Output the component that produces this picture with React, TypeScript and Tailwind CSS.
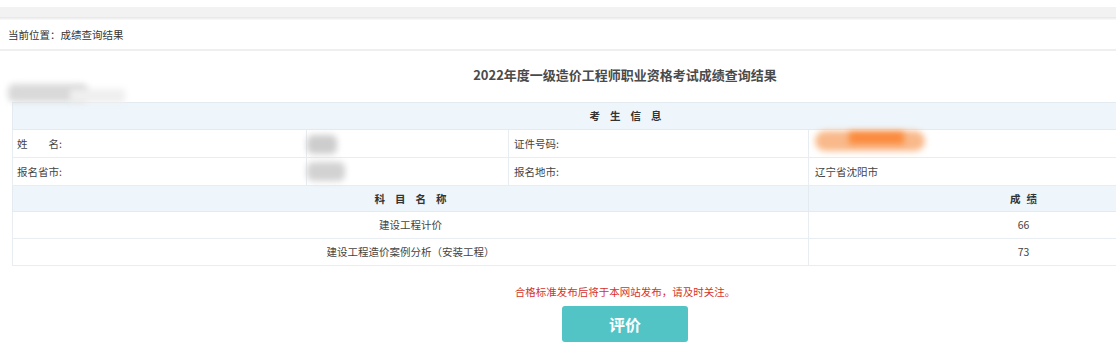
const font = '"Noto Sans CJK SC", "Liberation Sans", sans-serif'

function Spaced({ chars, gap }: { chars: string[]; gap: string }) {
	return (
		<div className={`flex justify-center ${gap}`}>
			{chars.map((c, i) => (
				<span key={i}>{c}</span>
			))}
		</div>
	)
}

function Blur({ className }: { className: string }) {
	return <div className={`absolute blur-[3px] ${className}`} />
}

export default function App() {
	return (
		<div className="h-[351px] w-[1116px] overflow-hidden bg-white" style={{ fontFamily: font }}>
			<div className="w-[1250px]">
				{/* top strip */}
				<div className="h-[7px] bg-white" />
				<div className="h-[10px] bg-[#f2f2f2]" />
				<div className="h-[3px] bg-gradient-to-b from-[#e6e6e6] to-[#fafafa]" />

				{/* breadcrumb */}
				<div className="flex h-[31px] items-center border-b-2 border-[#efefef] pl-[8px] text-[10.5px] text-[#333]">
					当前位置：成绩查询结果
				</div>

				<div className="relative">
					<h1 className="pt-[14px] text-center text-[13px] font-bold leading-[20px] text-[#4a4a4a]">
						2022年度一级造价工程师职业资格考试成绩查询结果
					</h1>
					<Blur className="left-[8px] top-[33px] h-[18px] w-[80px] rounded-md bg-[#d9d9d9]" />
					<Blur className="left-[70px] top-[38px] h-[14px] w-[55px] bg-[#efefef]" />

					<div className="mx-[12px] mt-[17px]">
						<table className="w-full table-fixed border-collapse text-[10.5px] text-[#444]">
							<colgroup>
								<col className="w-[294px]" />
								<col className="w-[202px]" />
								<col className="w-[300px]" />
								<col className="w-[430px]" />
							</colgroup>
							<tbody>
								<tr className="h-[27px] bg-[#eef6fc]">
									<td colSpan={4} className="border border-[#e3ebf1] font-bold text-[#333]">
										<Spaced chars={['考', '生', '信', '息']} gap="gap-[10px]" />
									</td>
								</tr>
								<tr className="h-[28px]">
									<td className="border border-[#e8edf1] px-[4px]">姓{'\u3000\u3000'}名:</td>
									<td className="relative border border-[#e8edf1] px-[5px]">
										<Blur className="left-0 top-[5px] h-[19px] w-[30px] rounded-md bg-[#cdcdcd]" />
									</td>
									<td className="border border-[#e8edf1] px-[5px]">证件号码:</td>
									<td className="relative border border-[#e8edf1] px-[6px]">
										<Blur className="left-[6px] top-[1px] h-[20px] w-[110px] rounded-full bg-[#f9b98a]" />
										<Blur className="left-[40px] top-[2px] h-[12px] w-[55px] bg-[#fb8a3c]" />
									</td>
								</tr>
								<tr className="h-[28px]">
									<td className="border border-[#e8edf1] px-[4px]">报名省市:</td>
									<td className="relative border border-[#e8edf1] px-[5px]">
										<Blur className="left-0 top-[4px] h-[19px] w-[38px] rounded-md bg-[#d2d2d2]" />
									</td>
									<td className="border border-[#e8edf1] px-[5px]">报名地市:</td>
									<td className="border border-[#e8edf1] px-[6px]">辽宁省沈阳市</td>
								</tr>
								<tr className="h-[26px] bg-[#eef6fc]">
									<td colSpan={3} className="border border-[#e3ebf1] font-bold text-[#333]">
										<Spaced chars={['科', '目', '名', '称']} gap="gap-[10px]" />
									</td>
									<td className="border border-[#e3ebf1] font-bold text-[#333]">
										<Spaced chars={['成', '绩']} gap="gap-[6px]" />
									</td>
								</tr>
								<tr className="h-[27px]">
									<td colSpan={3} className="border border-[#e8edf1] text-center">建设工程计价</td>
									<td className="border border-[#e8edf1] text-center">66</td>
								</tr>
								<tr className="h-[27px]">
									<td colSpan={3} className="border border-[#e8edf1] text-center">建设工程造价案例分析（安装工程）</td>
									<td className="border border-[#e8edf1] text-center">73</td>
								</tr>
							</tbody>
						</table>
					</div>

					<p className="mt-[18px] text-center text-[10.5px] leading-[16px] text-[#d6322c]">
						合格标准发布后将于本网站发布，请及时关注。
					</p>
					<div className="mt-[6px] flex justify-center">
						<button className="flex h-[36px] w-[126px] items-center justify-center rounded-[3px] bg-[#53c4c6] text-[16px] font-bold text-white">
							评价
						</button>
					</div>
				</div>
			</div>
		</div>
	)
}
